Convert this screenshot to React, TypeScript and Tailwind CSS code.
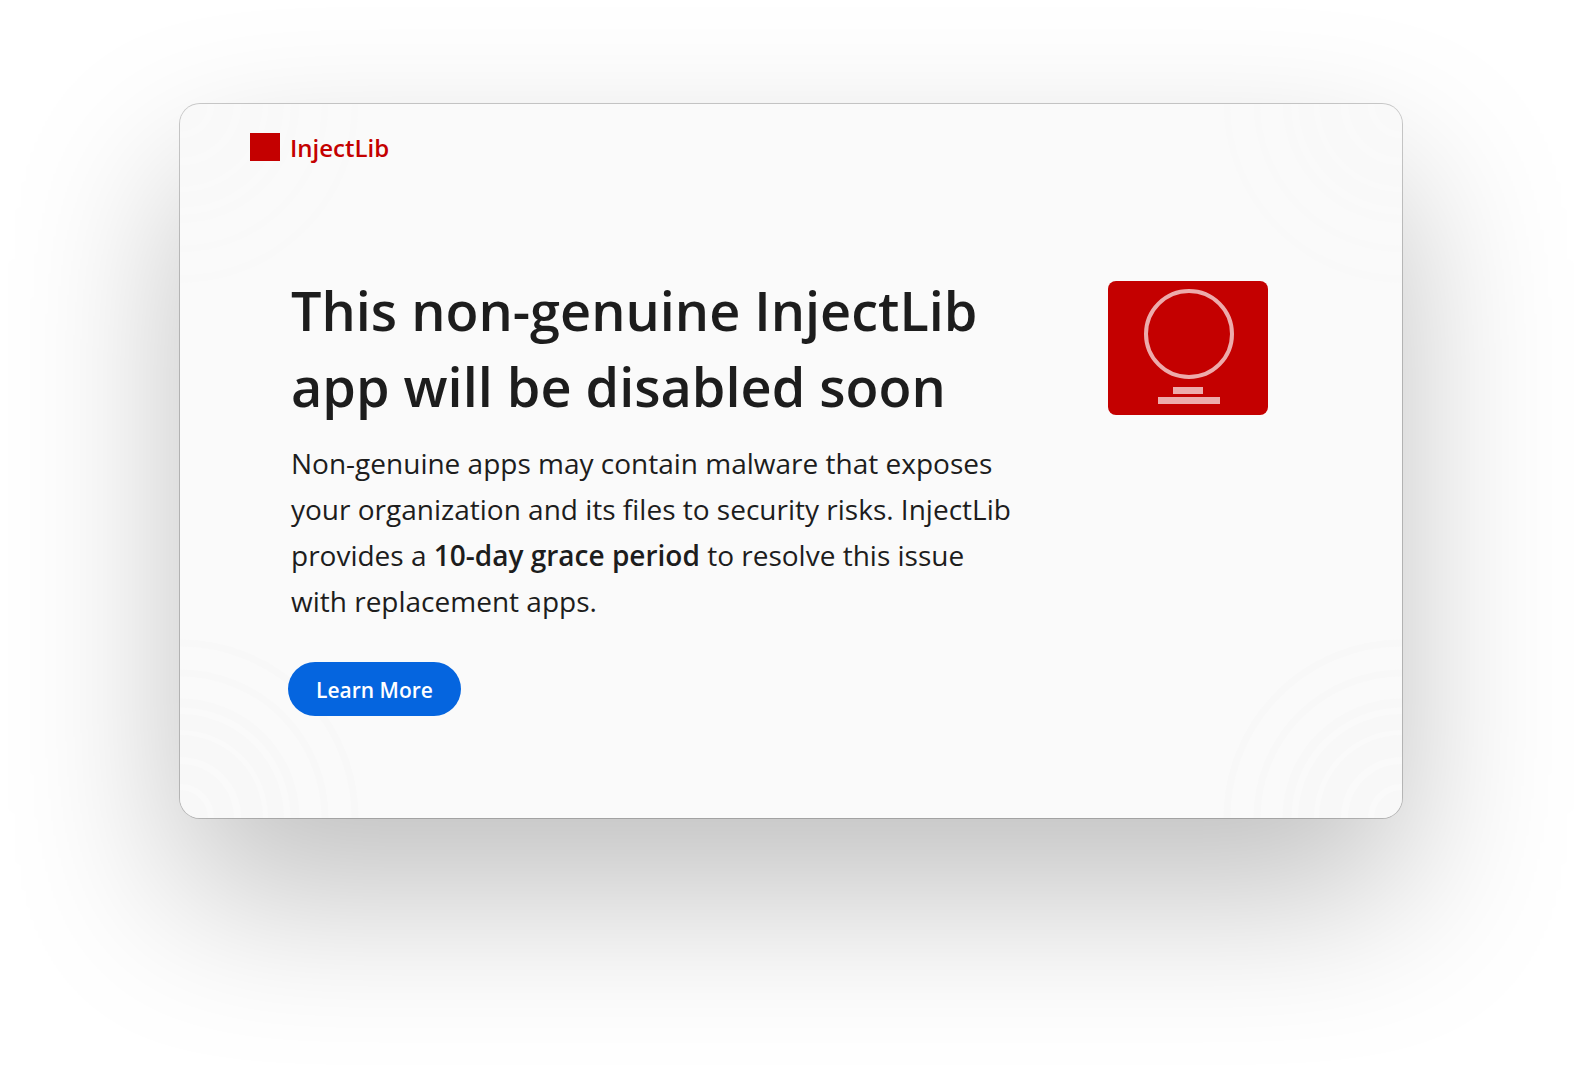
type Corner = 'tl' | 'tr' | 'bl' | 'br'

const cornerClass: Record<Corner, string> = {
  tl: 'left-0 top-0 rotate-180 opacity-40',
  tr: 'right-0 top-0 -scale-y-100 opacity-40',
  bl: 'left-0 bottom-0 -scale-x-100 opacity-80',
  br: 'right-0 bottom-0 opacity-80',
}

const rings = [
  { r: 175, w: 7 },
  { r: 145, w: 7 },
  { r: 115, w: 9 },
  { r: 96, w: 16 },
  { r: 72, w: 22 },
  { r: 44, w: 20 },
  { r: 14, w: 28 },
]

function CornerRings({ corner }: { corner: Corner }) {
  return (
    <svg
      aria-hidden="true"
      viewBox="0 0 180 180"
      className={`pointer-events-none absolute size-[180px] ${cornerClass[corner]}`}
      fill="none"
      stroke="#f8f8f8"
    >
      {rings.map(({ r, w }) => (
        <circle key={r} cx="180" cy="180" r={r} strokeWidth={w} />
      ))}
    </svg>
  )
}

function AppBadge() {
  return (
    <svg aria-hidden="true" viewBox="0 0 160 134" className="h-[134px] w-[160px] shrink-0">
      <rect width="160" height="134" rx="8" fill="#c40000" />
      <circle cx="81" cy="53" r="43" fill="none" stroke="#edabab" strokeWidth="4" />
      <rect x="65" y="106" width="30" height="7" fill="#edabab" />
      <rect x="50" y="116" width="62" height="7" fill="#edabab" />
    </svg>
  )
}

export default function App() {
  return (
    <div className="min-h-screen bg-white px-[180px] pt-[104px] pb-60 font-['Open_Sans',sans-serif] text-[#1d1d1d]">
      <main className="relative overflow-hidden rounded-[20px] bg-[#fafafa] shadow-[0_0_0_1px_rgba(0,0,0,0.2),0_75px_165px_rgba(0,0,0,0.25)]">
        <CornerRings corner="tl" />
        <CornerRings corner="tr" />
        <CornerRings corner="bl" />
        <CornerRings corner="br" />

        <header className="relative flex h-[86px] items-center gap-[10px] px-[70px]">
          <span className="h-7 w-[30px] bg-[#c40000]" />
          <span className="pt-0.5 text-[24px] leading-8 font-semibold text-[#c40000]">InjectLib</span>
        </header>

        <section className="relative flex items-start justify-between pt-[82px] pr-[134px] pb-[102px] pl-[111px]">
          <div>
            <h1 className="text-[54px] leading-[76px] font-semibold">
              This non-genuine InjectLib
              <br />
              app will be disabled soon
            </h1>
            <p className="mt-4 text-[28px] leading-[46px]">
              Non-genuine apps may contain malware that exposes
              <br />
              your organization and its files to security risks. InjectLib
              <br />
              provides a <strong className="font-semibold">10-day grace period</strong> to resolve this issue
              <br />
              with replacement apps.
            </p>
            <button
              type="button"
              className="mt-[38px] -ml-[3px] h-[54px] rounded-full bg-[#0565df] px-7 pt-0.5 text-[21px] leading-7 font-semibold text-white"
            >
              Learn More
            </button>
          </div>
          <div className="pt-[9px]">
            <AppBadge />
          </div>
        </section>
      </main>
    </div>
  )
}
